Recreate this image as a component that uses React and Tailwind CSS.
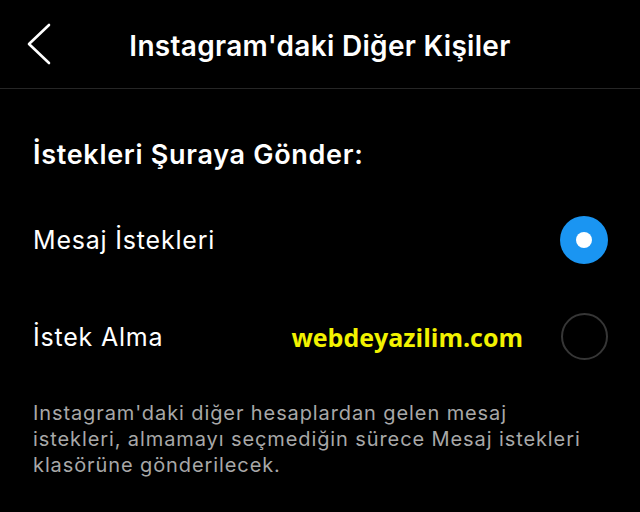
import React, { useState } from 'react';

const OPTIONS = [
  { id: 'requests', label: 'Mesaj İstekleri' },
  { id: 'none', label: 'İstek Alma' },
];

const BackIcon = () => (
  <svg width="28" height="44" viewBox="0 0 28 44" fill="none" className="block">
    <path d="M23 3 L3 22 L23 41" stroke="white" strokeWidth="2.6" strokeLinecap="round" strokeLinejoin="round" />
  </svg>
);

const Radio = ({ checked }) =>
  checked ? (
    <span className="flex h-12 w-12 items-center justify-center rounded-full bg-[#1a95f2]">
      <span className="h-4 w-4 rounded-full bg-white" />
    </span>
  ) : (
    <span className="block h-[47px] w-[47px] rounded-full border-2 border-[#363636]" />
  );

export default function App() {
  const [selected, setSelected] = useState('requests');

  return (
    <div className="h-[512px] w-[640px] overflow-hidden bg-black text-white font-['Inter',sans-serif]">
      <header className="grid h-[89px] grid-cols-[1fr_auto_1fr] items-center border-b border-[#262626]">
        <button className="ml-[26px] flex items-center">
          <BackIcon />
        </button>
        <h1 className="pt-[3px] text-[28px] font-semibold leading-8 tracking-[0.3px]">Instagram'daki Diğer Kişiler</h1>
        <div />
      </header>

      <main className="px-[33px]">
        <h2 className="mt-[50px] text-[27px] font-semibold leading-8 tracking-[0.7px]">İstekleri Şuraya Gönder:</h2>

        <div className="mt-[20px]">
          {OPTIONS.map((opt) => (
            <label
              key={opt.id}
              onClick={() => setSelected(opt.id)}
              className="flex h-[97px] cursor-pointer items-center justify-between"
            >
              <span className="text-[25px] leading-6 tracking-[0.8px]">{opt.label}</span>
              <span className="mr-[-1px] flex items-center gap-[38px]">
                {opt.id === 'none' && (
                  <span className="text-[25px] font-bold leading-6 text-[#f2f200] font-['Open_Sans',sans-serif]">
                    webdeyazilim.com
                  </span>
                )}
                <Radio checked={selected === opt.id} />
              </span>
            </label>
          ))}
        </div>

        <p className="mt-[15px] text-[20px] leading-[26px] tracking-[0.9px] text-[#a8a8a8]">
          Instagram'daki diğer hesaplardan gelen mesaj
          <br />
          istekleri, almamayı seçmediğin sürece Mesaj istekleri
          <br />
          klasörüne gönderilecek.
        </p>
      </main>
    </div>
  );
}
